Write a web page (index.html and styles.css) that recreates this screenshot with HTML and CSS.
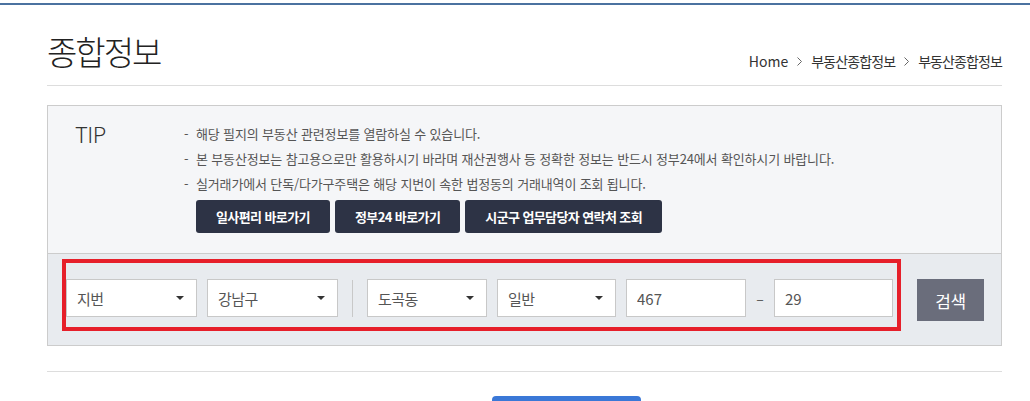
FILE: index.html
```html
<!DOCTYPE html>
<html lang="ko">
<head>
  <meta charset="UTF-8" />
  <meta name="viewport" content="width=device-width, initial-scale=1.0"/>
  <title>종합정보</title>
  <link rel="stylesheet" href="styles.css">
</head>
<body>
  <div class="topbar"></div>

  <div class="wrap">
    <div class="page-head">
      <h2 class="title">종합정보</h2>
      <ul class="breadcrumb">
        <li class="home">Home</li>
        <li class="sep"><svg width="5" height="9" viewBox="0 0 5 9"><polyline points="0.5,0.5 4.5,4.5 0.5,8.5" fill="none" stroke="#666" stroke-width="1"/></svg></li>
        <li>부동산종합정보</li>
        <li class="sep"><svg width="5" height="9" viewBox="0 0 5 9"><polyline points="0.5,0.5 4.5,4.5 0.5,8.5" fill="none" stroke="#666" stroke-width="1"/></svg></li>
        <li>부동산종합정보</li>
      </ul>
    </div>

    <div class="search-box">
      <div class="tip">
        <div class="tip-label">TIP</div>
        <div class="tip-body">
          <ul class="tip-list">
            <li>해당 필지의 부동산 관련정보를 열람하실 수 있습니다.</li>
            <li>본 부동산정보는 참고용으로만 활용하시기 바라며 재산권행사 등 정확한 정보는 반드시 정부24에서 확인하시기 바랍니다.</li>
            <li>실거래가에서 단독/다가구주택은 해당 지번이 속한 법정동의 거래내역이 조회 됩니다.</li>
          </ul>
          <div class="tip-btns">
            <button class="dark-btn">일사편리 바로가기</button>
            <button class="dark-btn">정부24 바로가기</button>
            <button class="dark-btn">시군구 업무담당자 연락처 조회</button>
          </div>
        </div>
      </div>

      <div class="search-row">
        <div class="field-group">
          <div class="select w131"><span>지번</span><i class="arrow"></i></div>
          <div class="select w131"><span>강남구</span><i class="arrow"></i></div>
          <div class="divider"></div>
          <div class="select w120"><span>도곡동</span><i class="arrow"></i></div>
          <div class="select w119"><span>일반</span><i class="arrow"></i></div>
          <input class="text-input w120" type="text" value="467">
          <span class="dash">–</span>
          <input class="text-input w119" type="text" value="29">
        </div>
        <button class="search-btn">검색</button>
      </div>
    </div>

    <div class="bottom-line"></div>
    <div class="bottom-btns">
      <button class="blue-btn"></button>
    </div>
  </div>
</body>
</html>
```

FILE: styles.css
```css
* {
  margin: 0;
  padding: 0;
  box-sizing: border-box;
}

body {
  font-family: "Noto Sans CJK KR", "Noto Sans", sans-serif;
  background-color: #fff;
  color: #333;
}

ul {
  list-style: none;
}

.topbar {
  margin-top: 3px;
  height: 2px;
  background-color: #4b72a0;
}

.wrap {
  width: 955px;
  margin-left: 47px;
}

.page-head {
  height: 81px;
  display: flex;
  justify-content: space-between;
  align-items: flex-end;
  border-bottom: 1px solid #ddd;
}

.title {
  font-size: 33px;
  font-weight: 300;
  letter-spacing: -2px;
  line-height: 40px;
  color: #222;
  padding-bottom: 14px;
}

.breadcrumb {
  display: flex;
  align-items: center;
  font-size: 14px;
  line-height: 20px;
  letter-spacing: -0.9px;
  color: #333;
  padding-bottom: 14px;
}

.breadcrumb .home {
  letter-spacing: 0;
}

.breadcrumb .sep {
  display: flex;
  margin: 0 9px;
}

.search-box {
  margin-top: 19px;
  border: 1px solid #ccc;
}

.tip {
  display: flex;
  background-color: #f5f6f8;
  padding: 15px 0 20px 27px;
}

.tip-label {
  width: 109px;
  font-size: 22px;
  font-weight: 300;
  line-height: 25px;
  letter-spacing: -0.5px;
  color: #333;
}

.tip-list li {
  font-size: 13px;
  line-height: 25px;
  letter-spacing: -0.15px;
  color: #555;
}

.tip-list li::before {
  content: "-";
  display: inline-block;
  width: 12px;
  letter-spacing: 0;
}

.tip-btns {
  display: flex;
  gap: 5px;
  margin-top: 4px;
  margin-left: 12px;
}

.dark-btn {
  height: 33px;
  padding: 0 20px;
  border: none;
  border-radius: 3px;
  background-color: #2d3345;
  color: #fff;
  font-family: inherit;
  font-size: 13px;
  font-weight: bold;
  letter-spacing: -0.6px;
}

.search-row {
  display: flex;
  align-items: flex-start;
  gap: 24px;
  background-color: #e8ebef;
  border-top: 1px solid #ccc;
  padding: 25px 0 24px 18px;
}

.field-group {
  position: relative;
  display: flex;
  align-items: center;
  gap: 10px;
}

/* red highlight drawn over the fields */
.field-group::after {
  content: "";
  position: absolute;
  left: -4px;
  right: -8px;
  top: -20px;
  bottom: -14px;
  border: 4px solid #e61f2a;
  pointer-events: none;
}

.select,
.text-input {
  height: 38px;
  background-color: #fff;
  border: 1px solid #c8c8c8;
  font-family: inherit;
  font-size: 15px;
  letter-spacing: -0.5px;
  color: #555;
}

.select {
  display: flex;
  align-items: center;
  justify-content: space-between;
  padding: 0 12px 0 10px;
}

.arrow {
  width: 0;
  height: 0;
  border-left: 4px solid transparent;
  border-right: 4px solid transparent;
  border-top: 4px solid #333;
}

.text-input {
  padding: 0 10px;
  letter-spacing: 0;
  outline: none;
}

.w131 { width: 131px; }
.w120 { width: 120px; }
.w119 { width: 119px; }

.divider {
  width: 1px;
  height: 37px;
  background-color: #c8c8c8;
  margin: 0 4px;
}

.dash {
  width: 8px;
  text-align: center;
  font-size: 14px;
  color: #555;
}

.search-btn {
  width: 67px;
  height: 42px;
  border: none;
  background-color: #6a6d7b;
  color: #fff;
  font-family: inherit;
  font-size: 17px;
  letter-spacing: -0.5px;
}

.bottom-line {
  margin-top: 25px;
  border-top: 1px solid #ddd;
}

.bottom-btns {
  padding: 24px 0 0 445px;
}

.blue-btn {
  width: 149px;
  height: 44px;
  border: none;
  border-radius: 4px;
  background-color: #3a78d7;
}
```
